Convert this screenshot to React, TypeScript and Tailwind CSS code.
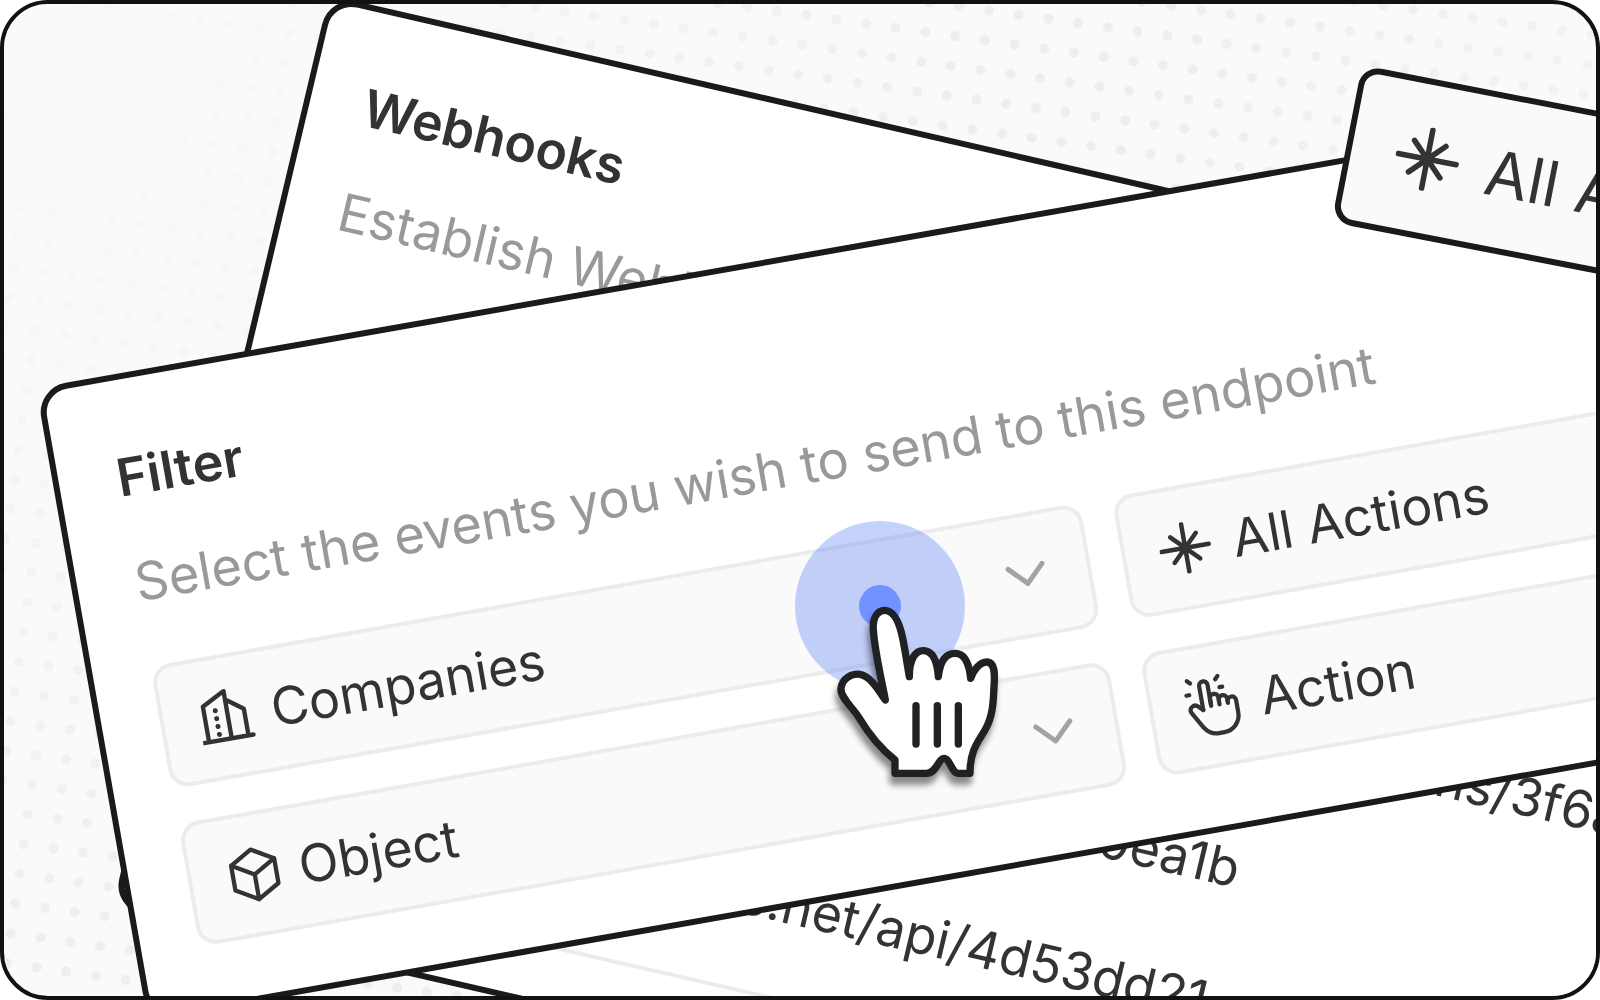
const font = { fontFamily: "Inter, 'Noto Sans', sans-serif" };

function StarIcon({ className }: { className?: string }) {
  return (
    <svg viewBox="0 0 52 52" className={className} fill="none" stroke="currentColor" strokeWidth="4.5" strokeLinecap="round">
      <path d="M26 2v48M2 26h48M13 13l26 26M39 13L13 39" />
    </svg>
  );
}

function BuildingIcon() {
  return (
    <svg viewBox="0 0 56 56" className="h-14 w-14 shrink-0" fill="none" stroke="currentColor" strokeWidth="4.4" strokeLinecap="round" strokeLinejoin="round">
      <path d="M1 50h50M6 50V14L29 2v48M31 12l15 11v27" />
      <path d="M17.5 20v.01M17.5 28v.01M17.5 36v.01M17.5 44v.01" strokeWidth="5" />
    </svg>
  );
}

function CubeIcon() {
  return (
    <svg viewBox="0 0 60 60" className="h-14 w-14 shrink-0" fill="none" stroke="currentColor" strokeWidth="4.6" strokeLinejoin="round" strokeLinecap="round">
      <path d="M30 3l23.4 13.5v27L30 57 6.6 43.500v-27zM6.600 16.500L30 30l23.400-13.500M30 30v27" />
    </svg>
  );
}

function HandClickIcon() {
  return (
    <svg viewBox="0 0 24 24" className="-ml-[8px] -mr-[4px] h-[68px] w-[68px] shrink-0" fill="none" stroke="currentColor" strokeWidth="1.5" strokeLinecap="round" strokeLinejoin="round">
      <path d="M8 13v-8.500a1.500 1.500 0 0 1 3 0v7.500" />
      <path d="M11 11.500v-2a1.500 1.500 0 0 1 3 0v2.500" />
      <path d="M14 10.500a1.500 1.500 0 0 1 3 0v1.500" />
      <path d="M17 11.500a1.500 1.500 0 0 1 3 0v4.500a6 6 0 0 1 -6 6h-2h.208a6 6 0 0 1 -5.012 -2.700l-.196 -.300c-.312 -.479 -1.407 -2.388 -3.286 -5.728a1.500 1.500 0 0 1 .536 -2.022a1.867 1.867 0 0 1 2.280 .280l1.470 1.470" />
      <path d="M5 3l-1 -1M4 7h-1M14 3l1 -1M15 6h1" />
    </svg>
  );
}

function Chevron() {
  return (
    <svg viewBox="0 0 48 48" className="h-[46px] w-[46px] shrink-0 text-[#a3a3a3]" fill="none" stroke="currentColor" strokeWidth="5.2" strokeLinecap="round" strokeLinejoin="round">
      <path d="M6 14l18 18 18-18" />
    </svg>
  );
}

function Field({ icon, label, chevron }: { icon: React.ReactNode; label: string; chevron?: boolean }) {
  return (
    <div className="flex h-[125px] items-center gap-[17px] rounded-[20px] border-[4px] border-[#ececec] bg-[#fafafa] pl-[35px] pr-[38px] text-[#333]">
      {icon}
      <span className="flex-1 text-[52px] leading-[60px]">{label}</span>
      {chevron && <Chevron />}
    </div>
  );
}

function HandCursor() {
  return (
    <svg
      viewBox="0 0 660 870"
      className="absolute left-[776px] top-[506px] h-[290px] w-[220px] drop-shadow-[-2px_8px_3px_rgba(0,0,0,0.45)]"
      fill="#fff"
      stroke="#202124"
      strokeWidth="22"
      strokeLinecap="round"
      strokeLinejoin="round"
    >
      <path d="M316 570 C305 510 285 430 280 360 C277 320 295 300 315 301 C345 303 360 345 368 385 C376 425 382 465 388 500 C388 450 405 420 432 422 C462 424 472 460 475 500 C480 455 495 430 525 430 C555 430 568 465 572 505 C580 480 600 455 622 456 C645 458 645 490 642 530 C640 580 638 620 615 660 C595 695 570 720 570 790 L535 790 C515 790 510 745 492 745 C475 745 470 790 440 790 L345 790 L345 750 C300 715 265 670 235 620 C215 590 180 560 183 535 C186 505 215 490 240 493 C270 497 295 540 316 570 Z" />
      <path d="M408 587V702M472 587V702M535 587V702" fill="none" />
    </svg>
  );
}

export default function App() {
  return (
    <div style={font} className="relative h-[1000px] w-[1600px] overflow-hidden rounded-[48px] border-[4px] border-[#121212] bg-[#fafafa]">
      {/* dotted backdrop, fades out towards the top left */}
      <div className="absolute -inset-[300px] rotate-[8deg] bg-[radial-gradient(circle,#eeeeee_4.5px,transparent_5.5px)] bg-[size:30px_30px]" />
      <div className="absolute inset-0 bg-[radial-gradient(circle_at_5%_10%,rgba(250,250,250,0.85)_5%,rgba(250,250,250,0.4)_30%,rgba(250,250,250,0)_50%,rgba(250,250,250,0)_60%,rgba(250,250,250,0.4)_85%)]" />

      {/* back card */}
      <div className="absolute left-[325px] top-[-9px] h-[938px] w-[1900px] origin-top-left rotate-[12.95deg] skew-x-[-0.4deg] rounded-[30px] border-[6px] border-[#1a1a1a] bg-white pl-[54px] pt-[64px]">
        <div className="text-[52px] font-semibold leading-[64px] text-[#333]">Webhooks</div>
        <div className="mt-[44px] whitespace-nowrap text-[52.4px] leading-[60px] text-[#999]">Establish Webhook endpoints for notifications</div>
        <div className="mt-[208px] text-[52px] leading-[135px] text-[#333]">
          <div className="h-[135px] whitespace-nowrap pl-[527px]">https://hooks.acme.io/actions/3f6a9c10d2</div>
          <div className="h-[135px] whitespace-nowrap pl-[153px]">https://acme.com/hooks/8c2f0ea1b</div>
          <div className="h-[135px] whitespace-nowrap pl-[130px]">https://hook.acme.net/api/4d53dd21</div>
        </div>
        <div className="mt-[25px] border-b-[4px] border-[#ececec]" />
      </div>

      {/* front card */}
      <div className="absolute left-[32px] top-[384px] h-[643px] w-[2100px] origin-top-left rotate-[-10deg] rounded-[30px] border-[6px] border-[#1a1a1a] bg-white pl-[58px] pt-[66px]">
        <div className="text-[52px] font-semibold leading-[64px] text-[#333]">Filter</div>
        <div className="mt-[43px] whitespace-nowrap text-[52.4px] leading-[60px] text-[#999]">Select the events you wish to send to this endpoint</div>
        <div className="mt-[55px] grid grid-cols-[944px_944px] gap-x-[32px] gap-y-[35px]">
          <Field icon={<BuildingIcon />} label="Companies" chevron />
          <Field icon={<StarIcon className="-ml-[1px] mr-[5px] h-[52px] w-[52px] shrink-0" />} label="All Actions" />
          <Field icon={<CubeIcon />} label="Object" chevron />
          <Field icon={<HandClickIcon />} label="Action" />
        </div>
      </div>

      {/* floating badge */}
      <div className="absolute left-[1358px] top-[61px] flex h-[160px] w-[500px] origin-top-left rotate-[11deg] items-center gap-[28px] rounded-[20px] border-[6px] border-[#1a1a1a] bg-[#fafafa] pl-[44px] text-[#333]">
        <StarIcon className="h-16 w-16 shrink-0" />
        <span className="whitespace-nowrap text-[63px] leading-[72px]">All Actions</span>
      </div>

      {/* click ripple + cursor */}
      <div className="absolute left-[791px] top-[517px] flex h-[170px] w-[170px] items-center justify-center rounded-full bg-[rgba(64,107,245,0.3)]">
        <div className="h-[42px] w-[42px] rounded-full bg-[#7293ff]" />
      </div>
      <HandCursor />
    </div>
  );
}
